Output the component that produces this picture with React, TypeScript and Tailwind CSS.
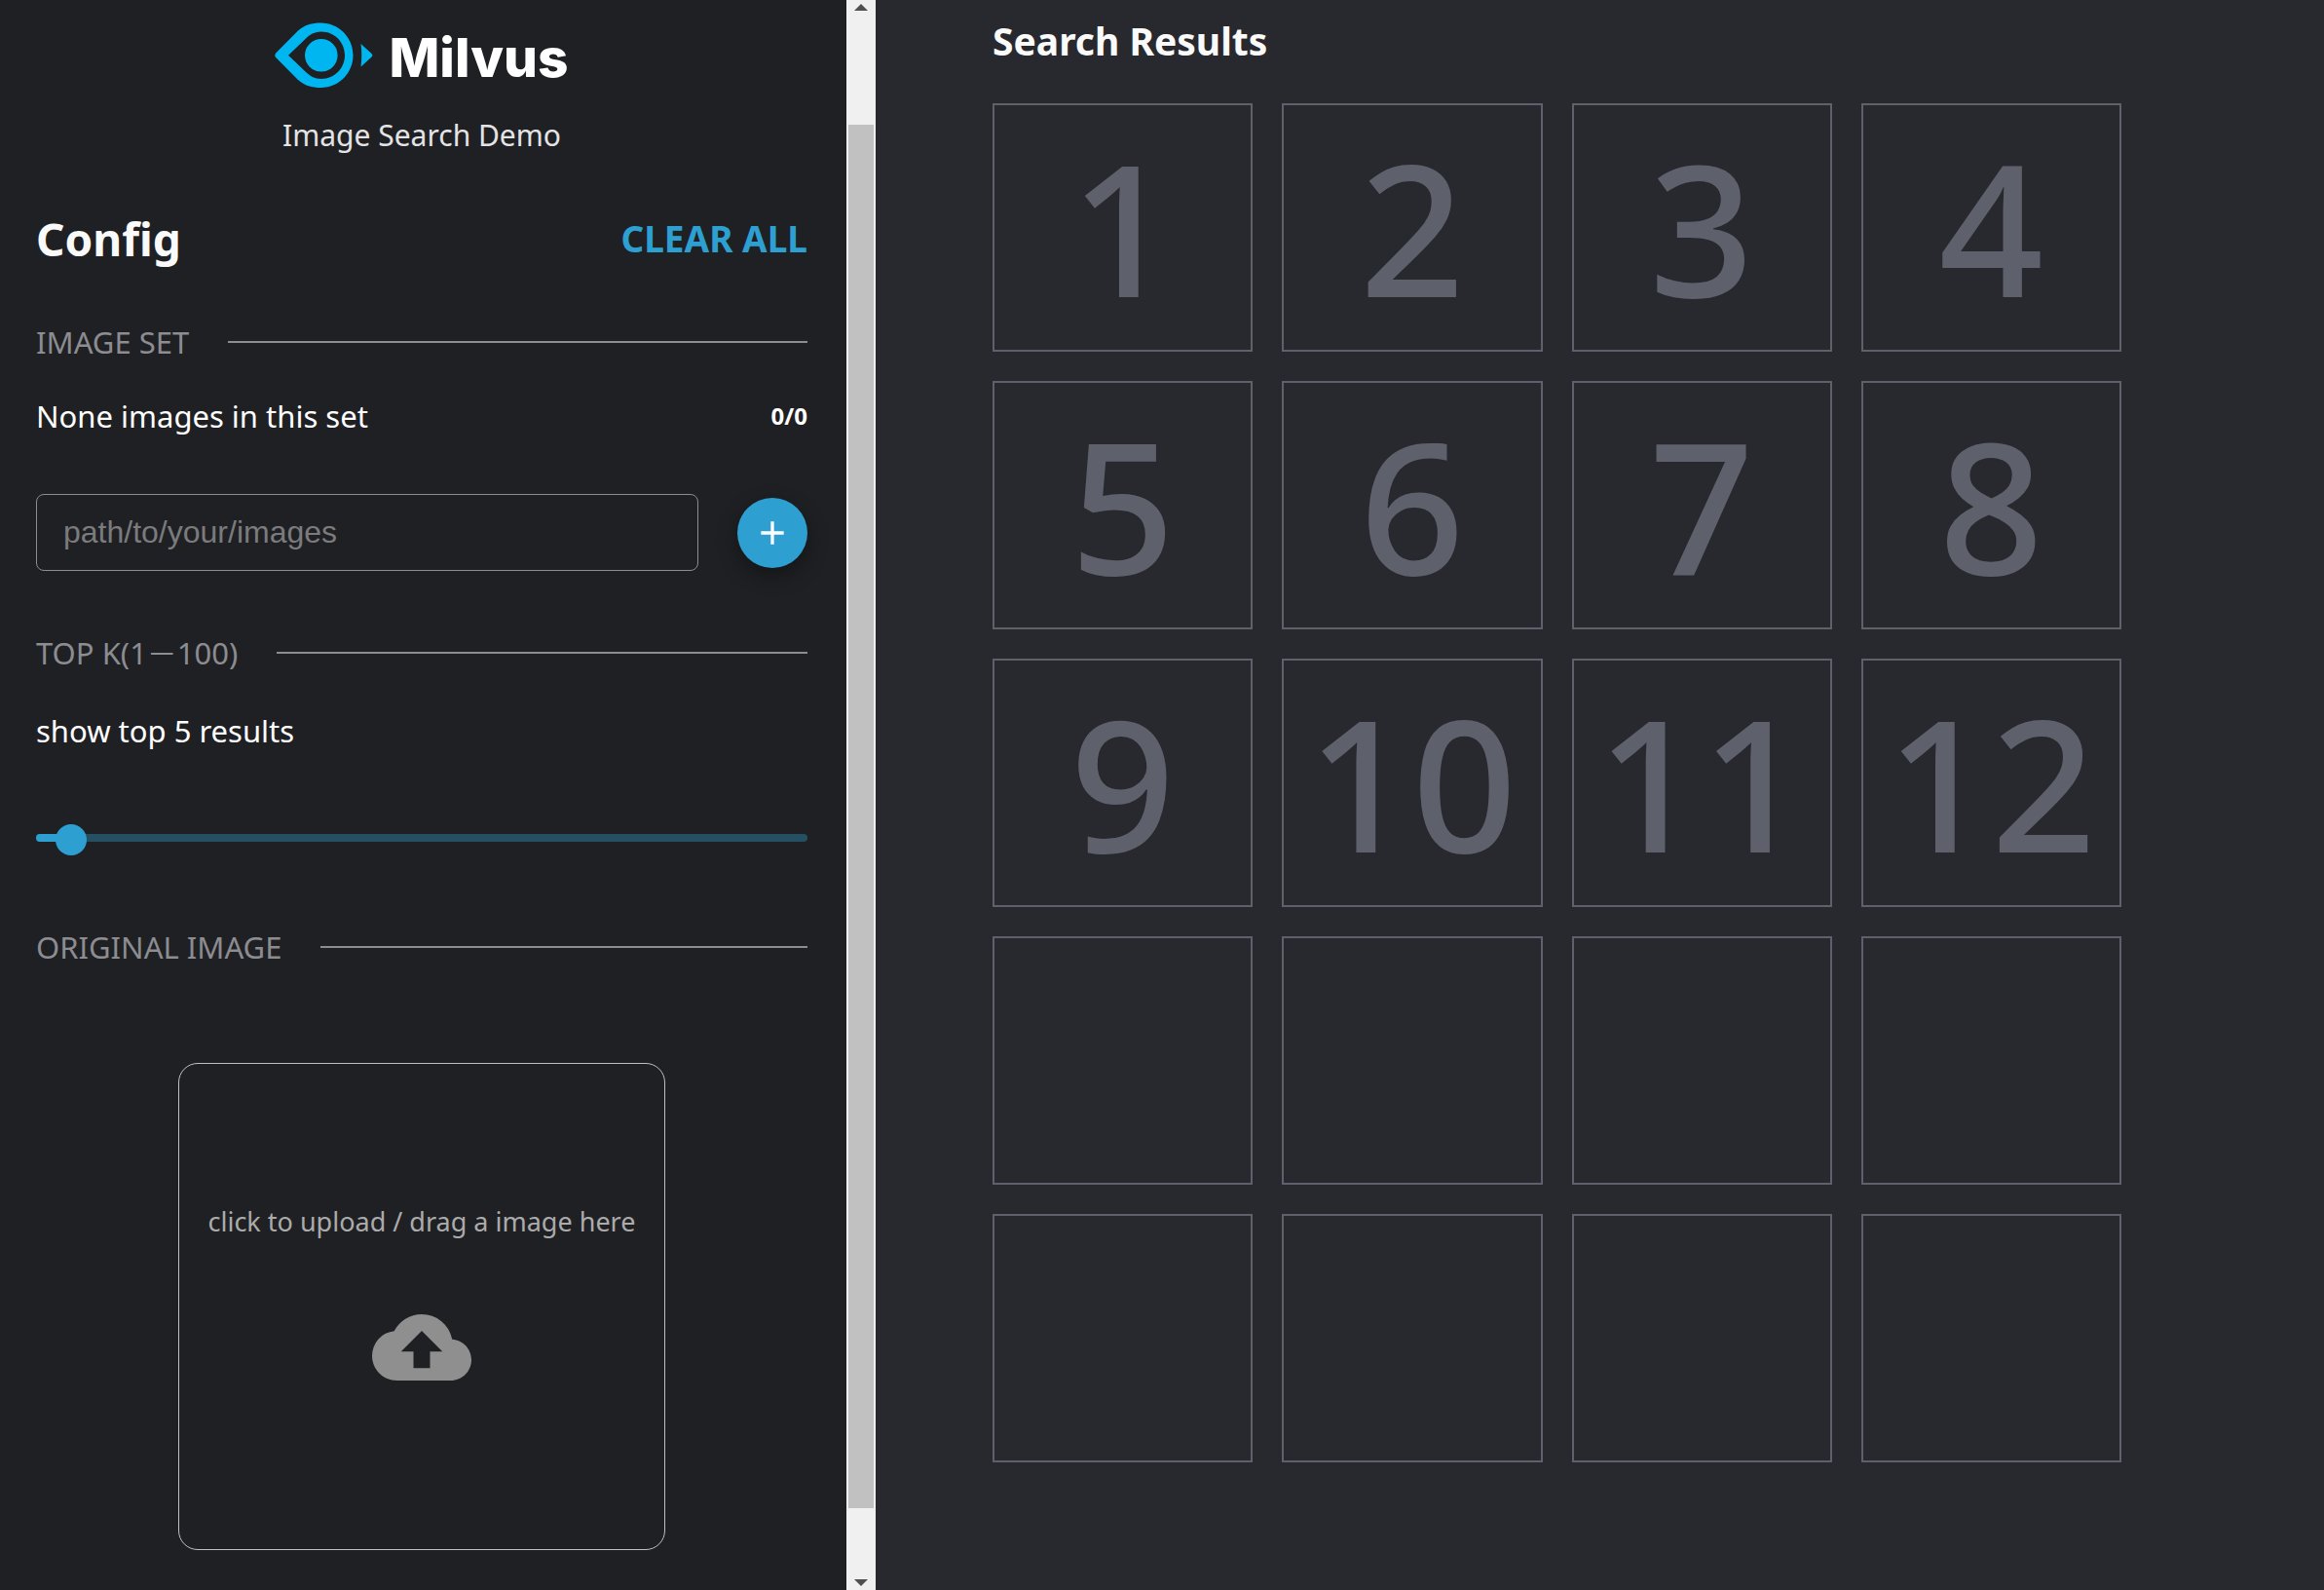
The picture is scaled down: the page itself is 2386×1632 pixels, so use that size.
import { useState } from "react";
import { MdAdd, MdCloudUpload } from "react-icons/md";

const RESULT_SLOTS = 20;
const NUMBERED_SLOTS = 12;

function MilvusLogo() {
  return (
    <div className="flex items-center justify-center gap-4">
      <svg viewBox="0 0 101 68" className="h-[68px] w-[101px]" fill="#00b6f1" aria-hidden="true">
        <path
          fillRule="evenodd"
          d="M1.2 31.5 L24 8.5 C31 2.5 38 0.5 47.5 0.5 C66 0.5 80.5 15.5 80.5 33.8 C80.5 52 66 67 47.5 67 C38 67 31 65 24 59 L1.2 36 C0 34.5 0 33 1.2 31.5 Z M14 33.8 L31 50 C36 55 41 58 48 58 C61.5 58 72 47 72 33.8 C72 20.5 61.5 9.6 48 9.6 C41 9.6 36 12.5 31 17.5 Z"
        />
        <circle cx="47.8" cy="33.8" r="16.8" />
        <path d="M88.5 22 L99.5 32 Q101.2 33.8 99.5 35.6 L88.5 45.5 Q90 33.8 88.5 22 Z" />
      </svg>
      <span className="pt-1 font-[Inter,sans-serif] text-[55px] leading-[68px] font-extrabold text-white">
        Milvus
      </span>
    </div>
  );
}

function SectionTitle({ children }: { children: string }) {
  return (
    <div className="flex items-center gap-10">
      <h2 className="text-[31px] leading-10 whitespace-nowrap text-[#8c8c91]">{children}</h2>
      <div className="h-[2px] flex-1 bg-[#8c8c91]" />
    </div>
  );
}

function TopKSlider({ value, onChange }: { value: number; onChange: (value: number) => void }) {
  return (
    <div className="relative h-2 rounded bg-[#254f63]">
      <div className="h-2 rounded bg-[#2d9fd0]" style={{ width: `${((value - 1) / 99) * 100}%` }} />
      <input
        type="range"
        min={1}
        max={100}
        value={value}
        aria-label="Top K"
        onChange={(e) => onChange(Number(e.target.value))}
        className="absolute -top-[10px] -right-5 -left-3 h-8 cursor-pointer appearance-none bg-transparent outline-none [&::-webkit-slider-thumb]:h-8 [&::-webkit-slider-thumb]:w-8 [&::-webkit-slider-thumb]:appearance-none [&::-webkit-slider-thumb]:rounded-full [&::-webkit-slider-thumb]:bg-[#2d9fd0]"
      />
    </div>
  );
}

function ScrollRail() {
  return (
    <div className="flex w-[30px] shrink-0 flex-col items-center bg-[#f0f0f0] py-1" aria-hidden="true">
      <svg viewBox="0 0 14 7" className="h-[7px] w-[14px]" fill="#505050">
        <path d="M7 0 L14 7 H0 Z" />
      </svg>
      <div className="mt-[117px] mb-[73px] w-[26px] flex-1 bg-[#c1c1c1]" />
      <svg viewBox="0 0 14 7" className="h-[7px] w-[14px]" fill="#505050">
        <path d="M0 0 H14 L7 7 Z" />
      </svg>
    </div>
  );
}

function ConfigPanel() {
  const [topK, setTopK] = useState(5);
  const [path, setPath] = useState("");
  return (
    <aside className="w-[869px] shrink-0 bg-[#1f2023] pt-[21px] pr-10 pb-10 pl-[37px]">
      <MilvusLogo />
      <p className="mt-[26px] text-center text-[30px] leading-10 text-[#e4e4e6]">Image Search Demo</p>

      <div className="mt-[54px] flex items-center justify-between">
        <h1 className="text-[46px] leading-[64px] font-bold text-[#fafafa]">Config</h1>
        <button type="button" className="text-[37px] leading-[64px] font-bold text-[#2d9fd0]">
          CLEAR ALL
        </button>
      </div>

      <div className="mt-[54px]">
        <SectionTitle>IMAGE SET</SectionTitle>
      </div>
      <div className="mt-9 flex items-center justify-between text-white">
        <p className="text-[31px] leading-10">None images in this set</p>
        <p className="text-[24px] leading-10 font-bold">0/0</p>
      </div>
      <div className="mt-[60px] flex items-center gap-10">
        <input
          type="text"
          aria-label="Path to images"
          placeholder="path/to/your/images"
          value={path}
          onChange={(e) => setPath(e.target.value)}
          className="h-[79px] min-w-0 flex-1 rounded-lg border border-[#8c8c91] bg-transparent px-[27px] font-['Liberation_Sans',sans-serif] text-[32px] text-white outline-none placeholder:text-[#7b7b7d]"
        />
        <button
          type="button"
          aria-label="Add images"
          className="flex size-[72px] shrink-0 items-center justify-center rounded-full bg-[#2d9fd0] text-white shadow-[0_8px_20px_2px_rgba(0,0,0,0.3)]"
        >
          <MdAdd className="size-10" />
        </button>
      </div>

      <div className="mt-16">
        <SectionTitle>TOP K(1－100)</SectionTitle>
      </div>
      <p className="mt-10 text-[31px] leading-10 text-white">show top {topK} results</p>
      <div className="mt-[86px]">
        <TopKSlider value={topK} onChange={setTopK} />
      </div>

      <div className="mt-[88px]">
        <SectionTitle>ORIGINAL IMAGE</SectionTitle>
      </div>
      <button
        type="button"
        className="mx-auto mt-[99px] flex size-[500px] flex-col items-center justify-center gap-[60px] rounded-[20px] border border-[#c0c0c0] pb-3"
      >
        <span className="text-[27px] leading-9 whitespace-nowrap text-[#ababab]">
          click to upload / drag a image here
        </span>
        <MdCloudUpload className="size-[102px] text-[#8f8f8f]" />
      </button>
    </aside>
  );
}

function ResultsPanel() {
  return (
    <main className="min-w-0 flex-1 bg-[#28292e] pt-[14px] pr-[208px] pl-[120px]">
      <h2 className="text-[39px] leading-14 font-bold text-[#fafafa]">Search Results</h2>
      <div className="mt-9 grid grid-cols-4 gap-[30px]">
        {Array.from({ length: RESULT_SLOTS }, (_, i) => (
          <div
            key={i}
            className="flex h-[255px] items-center justify-center border-2 border-[#5e606c] pb-1 text-[188px] leading-none font-medium text-[#5e606c]"
          >
            {i < NUMBERED_SLOTS ? i + 1 : ""}
          </div>
        ))}
      </div>
    </main>
  );
}

export default function App() {
  return (
    <div className="flex min-h-screen bg-[#28292e] font-['Noto_Sans','Noto_Sans_CJK_SC',sans-serif]">
      <ConfigPanel />
      <ScrollRail />
      <ResultsPanel />
    </div>
  );
}
